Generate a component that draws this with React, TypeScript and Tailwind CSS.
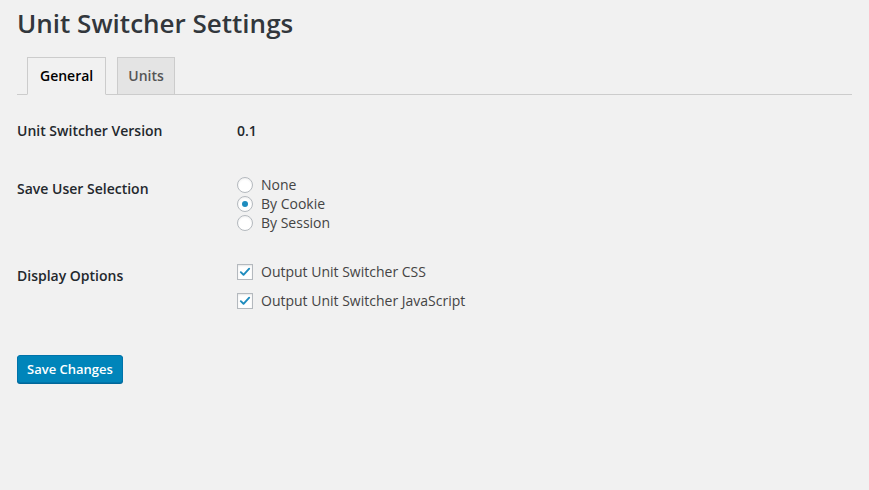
import React from "react";

const font = { fontFamily: '"Open Sans", "Noto Sans", sans-serif' };

function Radio({ label, checked }: { label: string; checked?: boolean }) {
  return (
    <label className="flex items-center h-[19px] text-[14px] text-[#444]">
      <span className="flex items-center justify-center w-4 h-4 rounded-full border border-[#b4b9be] bg-white shadow-[inset_0_1px_2px_rgba(0,0,0,0.07)]">
        {checked && <span className="w-[6px] h-[6px] rounded-full bg-[#1e8cbe]" />}
      </span>
      <span className="ml-2">{label}</span>
    </label>
  );
}

function Checkbox({ label }: { label: string }) {
  return (
    <label className="flex items-center h-[29px] text-[14px] text-[#444]">
      <span className="flex items-center justify-center w-4 h-4 border border-[#b4b9be] bg-white shadow-[inset_0_1px_2px_rgba(0,0,0,0.1)]">
        <svg viewBox="0 0 16 16" className="w-[14px] h-[14px]">
          <path d="M3.2 8.2 L6.3 11.2 L12.8 4.2" fill="none" stroke="#1e8cbe" strokeWidth="2.2" strokeLinecap="round" strokeLinejoin="round" />
        </svg>
      </span>
      <span className="ml-2">{label}</span>
    </label>
  );
}

export default function App() {
  return (
    <div className="min-h-[490px] w-full bg-[#f1f1f1] px-[17px]" style={font}>
      <h1 className="pt-[6px] text-[26px] leading-[34px] font-semibold text-[#32373c]">
        Unit Switcher Settings
      </h1>

      <div className="mt-[17px] flex items-end border-b border-[#ccc] pl-[10px]">
        <div className="-mb-px border border-[#ccc] border-b-[#f1f1f1] bg-[#f1f1f1] px-[12px] py-[5px] text-[14px] leading-[26px] font-semibold text-black">
          General
        </div>
        <div className="ml-[11px] -mb-px border border-[#ccc] bg-[#e4e4e4] px-[10px] py-[5px] text-[14px] leading-[26px] font-semibold text-[#555]">
          Units
        </div>
      </div>

      <div className="mt-[7px]">
        <div className="flex h-[58px]">
          <div className="w-[220px] pt-[20px] text-[14px] leading-[18px] font-semibold text-[#23282d]">
            Unit Switcher Version
          </div>
          <div className="pt-[20px] text-[14px] leading-[18px] font-semibold text-[#23282d]">0.1</div>
        </div>

        <div className="flex h-[86px]">
          <div className="w-[220px] pt-[20px] text-[14px] leading-[18px] font-semibold text-[#23282d]">
            Save User Selection
          </div>
          <div className="pt-[15px]">
            <Radio label="None" />
            <Radio label="By Cookie" checked />
            <Radio label="By Session" />
          </div>
        </div>

        <div className="flex h-[84px]">
          <div className="w-[220px] pt-[21px] text-[14px] leading-[18px] font-semibold text-[#23282d]">
            Display Options
          </div>
          <div className="pt-[11px]">
            <Checkbox label="Output Unit Switcher CSS" />
            <Checkbox label="Output Unit Switcher JavaScript" />
          </div>
        </div>
      </div>

      <div className="mt-[25px]">
        <button className="h-[28px] rounded-[3px] border border-[#0073aa] bg-[#0085ba] px-[9px] pb-px text-[13px] leading-[26px] font-semibold text-white shadow-[0_1px_0_#006799]">
          Save Changes
        </button>
      </div>
    </div>
  );
}
